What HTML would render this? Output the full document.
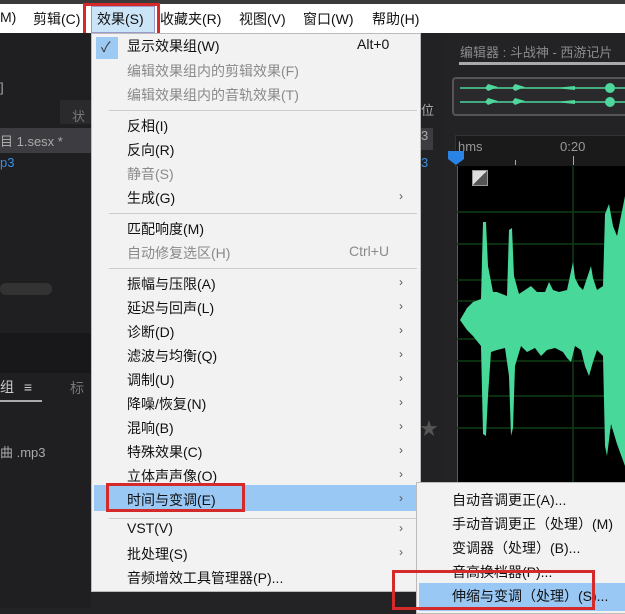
<!DOCTYPE html><html><head><meta charset="utf-8"><style>
body{margin:0;width:625px;height:608px;overflow:hidden;background:#232225;font-family:"Liberation Sans","Noto Sans CJK SC",sans-serif;position:relative}
.a{position:absolute}
.mb{left:0;top:4px;width:625px;height:29px;background:#fff;font-size:14px;color:#111}
.mb span{position:absolute;top:5px}
.menu{left:91px;top:33px;width:330px;height:559px;background:#f2f2f2;border:1px solid #bbb;box-sizing:border-box}
.it{position:absolute;left:35px;font-size:14px;color:#111;margin-top:-2px}
.g{color:#8a8a8a}
.ar{position:absolute;left:307px;font-size:12px;color:#555;margin-top:-2px}
.sep{position:absolute;left:17px;width:308px;height:1px;background:#ccc}
.sub{left:416px;top:482px;width:215px;height:130px;background:#f2f2f2;border:1px solid #bbb}
.si{position:absolute;left:35px;font-size:14px;color:#111;margin-top:-2px}
.red{position:absolute;border:3px solid #d42a2a;box-sizing:border-box}
</style></head><body>
<div class="a" style="left:0;top:0;width:625px;height:4px;background:#3a3a3a"></div>
<div class="a mb">
<span style="left:0">M)</span><span style="left:33px">剪辑(C)</span>
<div class="a" style="left:91px;top:2px;width:62px;height:25px;background:#cce4f7;border:1px solid #99c"></div>
<span style="left:97px">效果(S)</span><span style="left:160px">收藏夹(R)</span><span style="left:239px">视图(V)</span><span style="left:303px">窗口(W)</span><span style="left:372px">帮助(H)</span>
</div>
<div class="red" style="left:83px;top:3px;width:77px;height:34px"></div>
<div class="a" style="left:0;top:33px;width:91px;height:575px;background:#1f1e21"></div>
<div class="a" style="left:0;top:80px;color:#aaa;font-size:13px">]</div>
<div class="a" style="left:60px;top:100px;width:31px;height:24px;background:#2a292c;color:#777;font-size:13px;padding:6px 0 0 12px;box-sizing:border-box">状</div>
<div class="a" style="left:0;top:128px;width:91px;height:22px;background:#3d3c40;color:#aaa;font-size:13px;padding:3px 0 0 0">目 1.sesx *</div>
<div class="a" style="left:0;top:155px;color:#3d8fe0;font-size:13px">p3</div>
<div class="a" style="left:0;top:283px;width:52px;height:12px;background:#333;border-radius:6px"></div>
<div class="a" style="left:0;top:333px;width:91px;height:40px;background:#18171a"></div>
<div class="a" style="left:0;top:377px;color:#ccc;font-size:14px">组 <span style="margin-left:6px">≡</span></div>
<div class="a" style="left:0;top:400px;width:42px;height:2px;background:#aaa"></div>
<div class="a" style="left:70px;top:378px;color:#777;font-size:14px">标</div>
<div class="a" style="left:0;top:442px;color:#aaa;font-size:13px">曲 .mp3</div>
<div class="a" style="left:421px;top:33px;width:36px;height:575px;background:#222124"></div>
<div class="a" style="left:421px;top:100px;color:#aaa;font-size:13px">位</div>
<div class="a" style="left:421px;top:128px;width:12px;height:22px;background:#3d3c40;color:#aaa;font-size:13px">3</div>
<div class="a" style="left:421px;top:155px;color:#3d8fe0;font-size:13px">3</div>
<div class="a" style="left:420px;top:415px;color:#555;font-size:18px">★</div>
<div class="a" style="left:446px;top:33px;width:179px;height:575px;background:#232225"></div>
<div class="a" style="left:460px;top:42px;color:#8a8a8a;font-size:13px;white-space:nowrap">编辑器 : 斗战神 - 西游记片</div>
<div class="a" style="left:459px;top:62px;width:166px;height:3px;background:#aaa"></div>
<div class="a" style="left:452px;top:77px;width:180px;height:35px;border:2px solid #555;border-radius:4px;background:#2a292c"></div>
<svg class="a" style="left:455px;top:78px" width="170" height="34"><path d="M5 10H170M5 24H170" stroke="#4fd69b" stroke-width="1.5"/><path d="M30 10l3-4l10 3l-10 4zM57 10l3-4l10 3l-10 4zM30 24l3-4l10 3l-10 4zM57 24l3-4l10 3l-10 4zM100 10l20-2v4zM100 24l20-2v4zM150 10a5 5 0 1 0 10 0a5 5 0 1 0-10 0zM150 24a5 5 0 1 0 10 0a5 5 0 1 0-10 0z" fill="#4fd69b"/></svg>
<div class="a" style="left:455px;top:135px;width:170px;height:30px;background:#1a1a1a;border:1px solid #333"></div>
<div class="a" style="left:458px;top:139px;color:#999;font-size:13px">hms</div>
<div class="a" style="left:560px;top:139px;color:#999;font-size:13px">0:20</div>
<div class="a" style="left:573px;top:156px;width:1px;height:9px;background:#aaa"></div>
<div class="a" style="left:515px;top:160px;width:1px;height:5px;background:#aaa"></div>
<svg class="a" style="left:447px;top:150px" width="18" height="16"><path d="M1 1H17V9L9 15L1 9Z" fill="#2a84e6"/></svg>
<div class="a" style="left:457px;top:166px;width:168px;height:320px;background:#000"></div>
<div class="a" style="left:457px;top:166px;width:1px;height:320px;background:#b33"></div>
<div class="a" style="left:472px;top:170px;width:14px;height:14px;background:linear-gradient(135deg,#ddd 50%,#555 50%);border:1px solid #999"></div>
<svg class="a" style="left:457px;top:166px" width="168" height="320">
<g stroke="#0f3d12" stroke-width="1.5"><path d="M0 46H168M0 78H168M0 114H168M0 135H168M0 173H168M0 195H168M0 230H168M0 262H168"/><path d="M116 0V320"/></g>
<path d="M0 123H168" stroke="#aaa" stroke-width="2" transform="translate(0,195)"/>
<path fill="#47d89a" d="M3 154L10 142L16 136L24 133L26 56L29 56L31 100L36 126L40 126L50 130L52 64L55 62L57 110L62 128L68 124L74 120L80 126L88 126L92 116L96 124L102 126L110 124L116 96L118 112L122 120L126 124L130 112L134 100L136 112L140 124L146 120L148 48L152 38L156 60L160 70L168 30L168 300L160 278L154 258L150 290L148 280L146 190L140 184L136 196L132 210L128 200L124 184L118 180L114 196L110 192L106 186L98 182L90 184L84 190L78 182L70 186L64 180L58 200L56 262L54 270L52 210L48 182L40 184L34 186L31 230L29 270L26 268L24 180L16 170L10 164Z"/>
</svg>
<div class="a menu">
<div class="a" style="left:4px;top:3px;width:22px;height:22px;background:#9ccaf3"></div>
<div class="a" style="left:9px;top:3px;font-size:14px;color:#333">✓</div>
<div class="it" style="top:4px">显示效果组(W)</div><div class="it" style="top:4px;left:265px">Alt+0</div>
<div class="it g" style="top:29px">编辑效果组内的剪辑效果(F)</div>
<div class="it g" style="top:53px">编辑效果组内的音轨效果(T)</div>
<div class="sep" style="top:76px"></div>
<div class="it" style="top:84px">反相(I)</div>
<div class="it" style="top:108px">反向(R)</div>
<div class="it g" style="top:132px">静音(S)</div>
<div class="it" style="top:156px">生成(G)</div><div class="ar" style="top:157px">›</div>
<div class="sep" style="top:179px"></div>
<div class="it" style="top:187px">匹配响度(M)</div>
<div class="it g" style="top:211px">自动修复选区(H)</div><div class="it g" style="top:211px;left:257px">Ctrl+U</div>
<div class="sep" style="top:234px"></div>
<div class="it" style="top:242px">振幅与压限(A)</div><div class="ar" style="top:243px">›</div>
<div class="it" style="top:266px">延迟与回声(L)</div><div class="ar" style="top:267px">›</div>
<div class="it" style="top:290px">诊断(D)</div><div class="ar" style="top:291px">›</div>
<div class="it" style="top:314px">滤波与均衡(Q)</div><div class="ar" style="top:315px">›</div>
<div class="it" style="top:338px">调制(U)</div><div class="ar" style="top:339px">›</div>
<div class="it" style="top:362px">降噪/恢复(N)</div><div class="ar" style="top:363px">›</div>
<div class="it" style="top:386px">混响(B)</div><div class="ar" style="top:387px">›</div>
<div class="it" style="top:410px">特殊效果(C)</div><div class="ar" style="top:411px">›</div>
<div class="it" style="top:434px">立体声声像(O)</div><div class="ar" style="top:435px">›</div>
<div class="a" style="left:2px;top:451px;width:325px;height:26px;background:#99c8f5"></div>
<div class="it" style="top:458px">时间与变调(E)</div><div class="ar" style="top:459px">›</div>
<div class="sep" style="top:484px"></div>
<div class="it" style="top:488px">VST(V)</div><div class="ar" style="top:489px">›</div>
<div class="it" style="top:512px">批处理(S)</div><div class="ar" style="top:513px">›</div>
<div class="it" style="top:536px">音频增效工具管理器(P)...</div>
</div>
<div class="red" style="left:106px;top:483px;width:139px;height:29px"></div>
<div class="a sub">
<div class="si" style="top:9px">自动音调更正(A)...</div>
<div class="si" style="top:33px;white-space:nowrap">手动音调更正（处理）(M)</div>
<div class="si" style="top:57px;white-space:nowrap">变调器（处理）(B)...</div>
<div class="si" style="top:81px">音高换档器(P)...</div>
<div class="a" style="left:2px;top:100px;width:215px;height:28px;background:#99c8f5"></div>
<div class="si" style="top:105px;white-space:nowrap">伸缩与变调（处理）(S)...</div>
</div>
<div class="red" style="left:392px;top:570px;width:203px;height:40px"></div>
</body></html>
